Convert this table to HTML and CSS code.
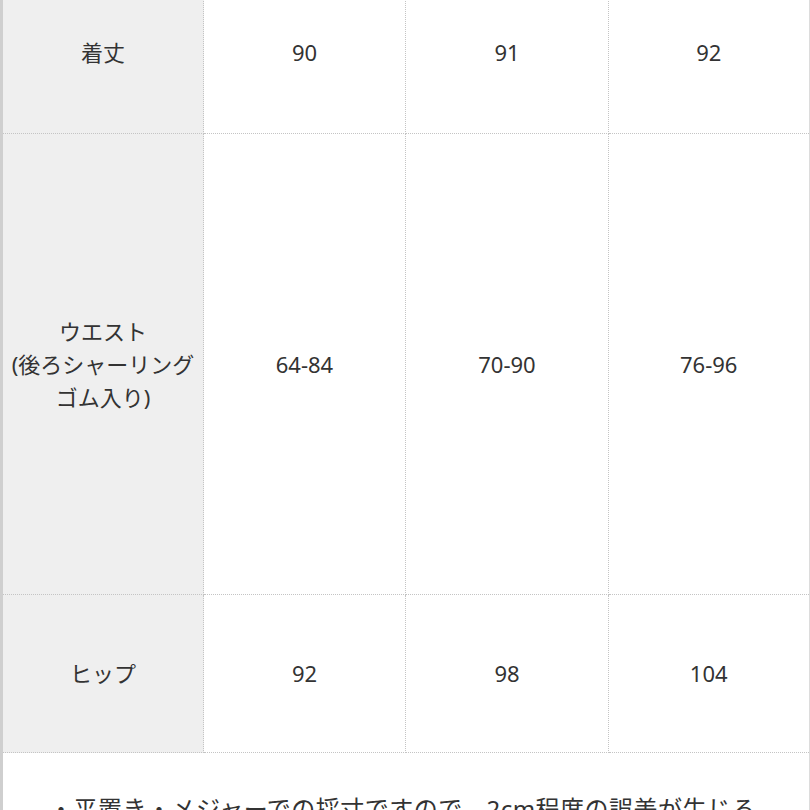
FILE: index.html
```html
<!DOCTYPE html>
<html lang="ja">
<head>
<meta charset="utf-8">
<link rel="stylesheet" href="styles.css">
</head>
<body>
<div class="frame">
  <table class="size-table">
    <colgroup>
      <col class="c1"><col class="c2"><col class="c3"><col class="c4">
    </colgroup>
    <tr class="row-len">
      <th>着丈</th><td>90</td><td>91</td><td>92</td>
    </tr>
    <tr class="row-waist">
      <th>ウエスト<br>(後ろシャーリング<br>ゴム入り)</th><td>64-84</td><td>70-90</td><td>76-96</td>
    </tr>
    <tr class="row-hip">
      <th>ヒップ</th><td>92</td><td>98</td><td>104</td>
    </tr>
    <tr class="row-note">
      <td colspan="4" class="note">・平置き・メジャーでの採寸ですので、2cm程度の誤差が生じる<br>場合がございます。</td>
    </tr>
  </table>
</div>
</body>
</html>
```
FILE: styles.css
```css
html, body {
  margin: 0;
  padding: 0;
  background: #ffffff;
  overflow: hidden;
}
.frame {
  width: 810px;
  height: 810px;
  overflow: hidden;
}
.size-table {
  margin-top: -30px;
  width: 808px;
  border-collapse: collapse;
  table-layout: fixed;
  border-left: 3px solid #cfcfcf;
  border-right: 2px solid #dcdcdc;
  font-family: "Noto Sans", "Noto Sans CJK JP", sans-serif;
  font-size: 22px;
  color: #333333;
}
.c1 { width: 202px; }
.c2 { width: 202px; }
.c3 { width: 203px; }
.c4 { width: 201px; }
.size-table th,
.size-table td {
  border: 1px dotted #c4c4c4;
  text-align: center;
  vertical-align: middle;
  font-weight: normal;
  padding: 0;
  line-height: 33px;
}
.size-table th {
  background: #efefef;
}
.row-len th, .row-len td { height: 162px; }
.row-waist th, .row-waist td { height: 460px; }
.row-hip th, .row-hip td { height: 157px; }
.size-table td.note {
  text-align: left;
  vertical-align: top;
  padding: 36px 10px 0 46px;
  font-size: 24px;
  letter-spacing: 0.5px;
  line-height: 40px;
  height: 120px;
}
```
